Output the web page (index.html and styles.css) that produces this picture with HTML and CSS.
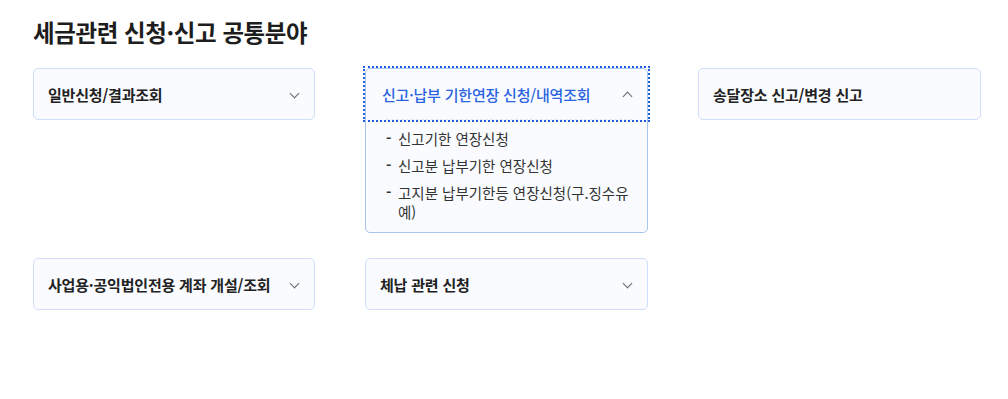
FILE: index.html
```html
<!DOCTYPE html>
<html lang="ko">
  <head>
    <meta charset="UTF-8" />
    <meta name="viewport" content="width=device-width, initial-scale=1.0" />
    <title>세금관련 신청·신고 공통분야</title>
    <link rel="stylesheet" href="styles.css">
  </head>
  <body>
    <div class="container">
      <h2 class="title">세금관련 신청·신고 공통분야</h2>
      <div class="cards">
        <div class="card">
          <button class="card__head">
            <span>일반신청/결과조회</span>
            <span class="chevron"></span>
          </button>
        </div>
        <div class="card card--open">
          <button class="card__head card__head--focus">
            <span>신고·납부 기한연장 신청/내역조회</span>
            <span class="chevron chevron--up"></span>
          </button>
          <ul class="card__list">
            <li>신고기한 연장신청</li>
            <li>신고분 납부기한 연장신청</li>
            <li>고지분 납부기한등 연장신청(구.징수유예)</li>
          </ul>
        </div>
        <div class="card">
          <button class="card__head">
            <span>송달장소 신고/변경 신고</span>
          </button>
        </div>
        <div class="card">
          <button class="card__head">
            <span>사업용·공익법인전용 계좌 개설/조회</span>
            <span class="chevron"></span>
          </button>
        </div>
        <div class="card">
          <button class="card__head">
            <span>체납 관련 신청</span>
            <span class="chevron"></span>
          </button>
        </div>
      </div>
    </div>
  </body>
</html>
```

FILE: styles.css
```css
* {
  margin: 0;
  padding: 0;
  box-sizing: border-box;
}

body {
  font-family: "Noto Sans CJK KR", "Noto Sans", sans-serif;
  color: #222;
  background: #fff;
}

.container {
  padding: 16px 0 0 33px;
}

.title {
  font-size: 23.5px;
  font-weight: 700;
  line-height: 32px;
  color: #1d1d1d;
  letter-spacing: -0.4px;
}

.cards {
  display: grid;
  grid-template-columns: 282px 283px 283px;
  column-gap: 50px;
  row-gap: 25px;
  align-items: start;
  margin-top: 20px;
}

.card {
  border: 1px solid #cfdff9;
  border-radius: 5px;
  background: #f9fbff;
}

.card__head {
  display: flex;
  align-items: center;
  justify-content: space-between;
  width: 100%;
  height: 50px;
  padding: 0 16px 0 14px;
  border: 0;
  background: none;
  font-family: inherit;
  font-size: 15px;
  font-weight: 700;
  color: #222;
  text-align: left;
  letter-spacing: -0.2px;
}

.chevron {
  flex: none;
  width: 7px;
  height: 7px;
  border-right: 1px solid #666;
  border-bottom: 1px solid #666;
  transform: rotate(45deg);
  margin-top: -2px;
}

.chevron--up {
  transform: rotate(-135deg);
  margin-top: 4px;
}

.card--open {
  border-color: #a8c3ee;
}

.card--open .card__head {
  padding-left: 16px;
  color: #2a63e0;
  font-weight: 500;
}

.card__head--focus {
  outline: 2px dotted #1f5fe0;
  outline-offset: 1px;
}

.card__list {
  list-style: none;
  margin: 0 15px 0 20px;
  padding: 9px 0 11px;
  border-top: 1px dashed #e3e7ee;
}

.card__list li {
  position: relative;
  padding-left: 12px;
  font-size: 14.5px;
  line-height: 19px;
  color: #333;
  margin-bottom: 8px;
}

.card__list li:last-child {
  margin-bottom: 0;
}

.card__list li::before {
  content: "-";
  position: absolute;
  left: 0;
  top: -1px;
  font-weight: 700;
}
```
